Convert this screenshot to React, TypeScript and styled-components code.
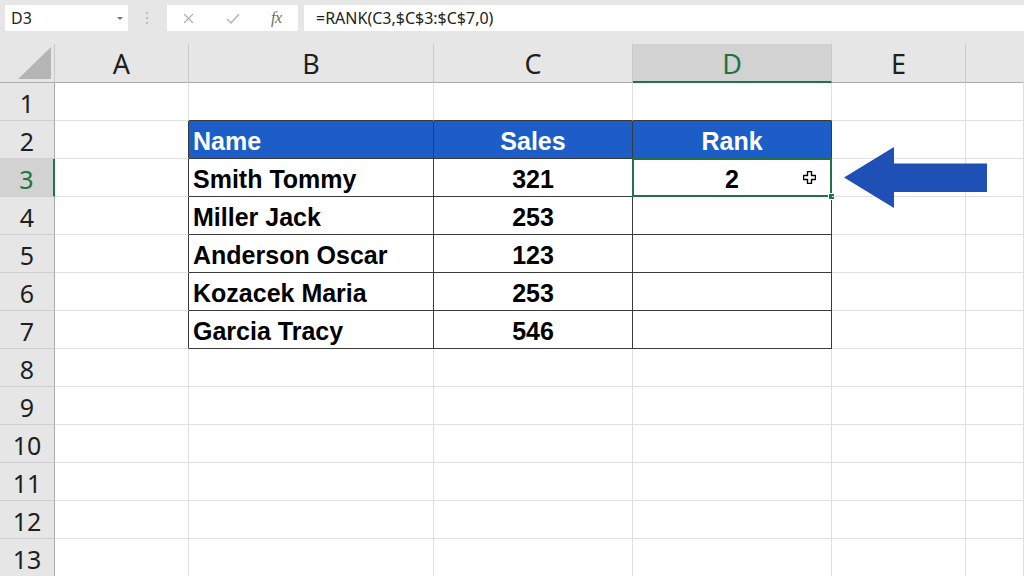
import React from "react";
import styled, { createGlobalStyle, css } from "styled-components";

const Global = createGlobalStyle`
  html, body { margin: 0; padding: 0; background: #ffffff; }
  body { width: 1024px; height: 576px; overflow: hidden; font-family: "Noto Sans", "Open Sans", sans-serif; }
  * { box-sizing: border-box; }
`;

const Page = styled.div`
  width: 1024px;
  height: 576px;
  overflow: hidden;
  display: flex;
  flex-direction: column;
  background: #ffffff;
`;

const Toolbar = styled.div`
  height: 44px;
  flex: none;
  background: #e6e6e6;
  display: flex;
  align-items: flex-start;
  padding: 5px 0 0 5px;
`;

const NameBox = styled.div`
  width: 123px;
  height: 26px;
  background: #ffffff;
  display: flex;
  align-items: center;
  justify-content: space-between;
  padding: 0 5px 0 6px;
  font-size: 16px;
  color: #222;
`;

const Caret = styled.span`
  width: 0;
  height: 0;
  border-left: 3px solid transparent;
  border-right: 3px solid transparent;
  border-top: 3px solid #777;
  margin-top: 1px;
`;

const Dots = styled.div`
  width: 39px;
  height: 26px;
  display: flex;
  flex-direction: column;
  align-items: center;
  justify-content: center;
  gap: 3px;
  padding-right: 2px;
`;

const Dot = styled.span`
  width: 2px;
  height: 2px;
  background: #bdbdbd;
`;

const FuncBox = styled.div`
  width: 131px;
  height: 26px;
  background: #ffffff;
  display: flex;
  align-items: center;
  padding-left: 15px;
`;

const FuncIcon = styled.span<{ $w: number }>`
  width: ${(p) => p.$w}px;
  display: flex;
  align-items: center;
  justify-content: center;
`;

const Fx = styled.span`
  font-family: "Liberation Serif", serif;
  font-style: italic;
  font-size: 16px;
  color: #6d6d6d;
  letter-spacing: -0.5px;
`;

const FormulaBox = styled.div`
  flex: 1;
  height: 26px;
  margin-left: 6px;
  background: #ffffff;
  display: flex;
  align-items: center;
  padding-left: 12px;
  font-size: 16px;
  color: #222;
`;

const Sheet = styled.div`
  flex: 1;
  display: grid;
  grid-template-columns: 55px 134px 245px 199px 199px 134px 1fr;
  grid-template-rows: 39px;
  grid-auto-rows: 38px;
  overflow: hidden;
`;

const ColHead = styled.div<{ $active?: boolean; $last?: boolean }>`
  background: ${(p) => (p.$active ? "#d2d2d2" : "#e6e6e6")};
  border-right: 1px solid ${(p) => (p.$last ? "transparent" : "#c9c9c9")};
  border-bottom: ${(p) => (p.$active ? "2px solid #217346" : "1px solid #ababab")};
  display: flex;
  align-items: center;
  justify-content: center;
  font-size: 27px;
  color: ${(p) => (p.$active ? "#217346" : "#1f1f1f")};
  padding-top: ${(p) => (p.$active ? "1px" : "0")};
`;

const Corner = styled.div`
  background: #e6e6e6;
  border-right: 1px solid #c9c9c9;
  border-bottom: 1px solid #ababab;
  display: flex;
  align-items: flex-end;
  justify-content: flex-end;
  padding: 0 3px 3px 0;
`;

const Triangle = styled.div`
  width: 33px;
  height: 32px;
  background: #b5b5b5;
  clip-path: polygon(100% 0, 100% 100%, 0 100%);
`;

const RowHead = styled.div<{ $active?: boolean }>`
  background: ${(p) => (p.$active ? "#d2d2d2" : "#e6e6e6")};
  border-right: ${(p) => (p.$active ? "2px solid #217346" : "1px solid #ababab")};
  border-bottom: 1px solid #cfcfcf;
  display: flex;
  align-items: center;
  justify-content: center;
  font-size: 25px;
  padding-top: 2px;
  color: ${(p) => (p.$active ? "#217346" : "#1f1f1f")};
`;

const Cell = styled.div<{
  $tone?: "head" | "body";
  $align?: "left" | "center";
  $darkR?: boolean;
  $darkB?: boolean;
  $overlay?: boolean;
}>`
  position: relative;
  border-right: 1px solid ${(p) => (p.$darkR ? "#3a3a3a" : "#e0e0e0")};
  border-bottom: 1px solid ${(p) => (p.$darkB ? "#3a3a3a" : "#e0e0e0")};
  display: flex;
  align-items: center;
  justify-content: ${(p) => (p.$align === "center" ? "center" : "flex-start")};
  padding-left: ${(p) => (p.$align === "center" ? "0" : "4px")};
  padding-top: 3px;
  font-family: "Liberation Sans", Arial, sans-serif;
  font-weight: 700;
  font-size: 25px;
  white-space: nowrap;
  color: #000;
  ${(p) =>
    p.$tone === "head" &&
    css`
      background: #1c5dc7;
      color: #ffffff;
    `}
  ${(p) =>
    p.$overlay &&
    css`
      z-index: 2;
    `}
`;

const Selection = styled.div`
  position: absolute;
  left: -1px;
  top: -1px;
  right: -1px;
  bottom: -1px;
  border: 2px solid #217346;
  pointer-events: none;
`;

const Handle = styled.div`
  position: absolute;
  right: -4px;
  bottom: -4px;
  width: 7px;
  height: 7px;
  background: #217346;
  border: 1px solid #ffffff;
`;

const Cursor = styled.svg`
  position: absolute;
  left: 170px;
  top: 12px;
`;

const Arrow = styled.svg`
  position: absolute;
  left: 12px;
  top: -12px;
  overflow: visible;
`;

const cols = ["A", "B", "C", "D", "E", ""];

const data: [string, string][] = [
  ["Smith Tommy", "321"],
  ["Miller Jack", "253"],
  ["Anderson Oscar", "123"],
  ["Kozacek Maria", "253"],
  ["Garcia Tracy", "546"],
];

function Row({ n }: { n: number }) {
  const inTable = n >= 2 && n <= 7;
  const head = n === 2;
  const item = n >= 3 && n <= 7 ? data[n - 3] : null;
  return (
    <>
      <RowHead $active={n === 3}>{n}</RowHead>
      <Cell $darkR={inTable} />
      <Cell
        $darkR={inTable}
        $darkB={inTable || n === 1}
        $tone={head ? "head" : undefined}
      >
        {head ? "Name" : item ? item[0] : ""}
      </Cell>
      <Cell
        $align="center"
        $darkR={inTable}
        $darkB={inTable || n === 1}
        $tone={head ? "head" : undefined}
      >
        {head ? "Sales" : item ? item[1] : ""}
      </Cell>
      <Cell
        $align="center"
        $darkR={inTable}
        $darkB={inTable || n === 1}
        $tone={head ? "head" : undefined}
        $overlay={n === 3}
      >
        {head ? "Rank" : n === 3 ? "2" : ""}
        {n === 3 && (
          <>
            <Selection />
            <Handle />
            <Cursor width="13" height="13" viewBox="0 0 13 13">
              <path
                d="M4.5 0.5h4v4h4v4h-4v4h-4v-4h-4v-4h4z"
                fill="#ffffff"
                stroke="#000000"
                strokeWidth="1.4"
                strokeLinejoin="round"
              />
            </Cursor>
          </>
        )}
      </Cell>
      <Cell $overlay={n === 3}>
        {n === 3 && (
          <Arrow width="143" height="61" viewBox="0 0 143 61">
            <polygon
              points="0,30.5 50,0 50,16.5 143,16.5 143,45 50,45 50,61"
              fill="#1f50b6"
            />
          </Arrow>
        )}
      </Cell>
      <Cell />
    </>
  );
}

export default function App() {
  const rows = Array.from({ length: 13 }, (_, i) => i + 1);
  return (
    <Page>
      <Global />
      <Toolbar>
        <NameBox>
          <span>D3</span>
          <Caret />
        </NameBox>
        <Dots>
          <Dot />
          <Dot />
          <Dot />
        </Dots>
        <FuncBox>
          <FuncIcon $w={12}>
            <svg width="11" height="11" viewBox="0 0 11 11">
              <path d="M1 1L10 10M10 1L1 10" stroke="#b3b3b3" strokeWidth="1.3" />
            </svg>
          </FuncIcon>
          <FuncIcon $w={77}>
            <svg width="14" height="11" viewBox="0 0 14 11">
              <path d="M1 6L5 10L13 1" stroke="#b3b3b3" strokeWidth="1.4" fill="none" />
            </svg>
          </FuncIcon>
          <Fx>fx</Fx>
        </FuncBox>
        <FormulaBox>=RANK(C3,$C$3:$C$7,0)</FormulaBox>
      </Toolbar>
      <Sheet>
        <Corner>
          <Triangle />
        </Corner>
        {cols.map((c, i) => (
          <ColHead key={i} $active={c === "D"} $last={i === cols.length - 1}>
            {c}
          </ColHead>
        ))}
        {rows.map((n) => (
          <Row key={n} n={n} />
        ))}
      </Sheet>
    </Page>
  );
}
